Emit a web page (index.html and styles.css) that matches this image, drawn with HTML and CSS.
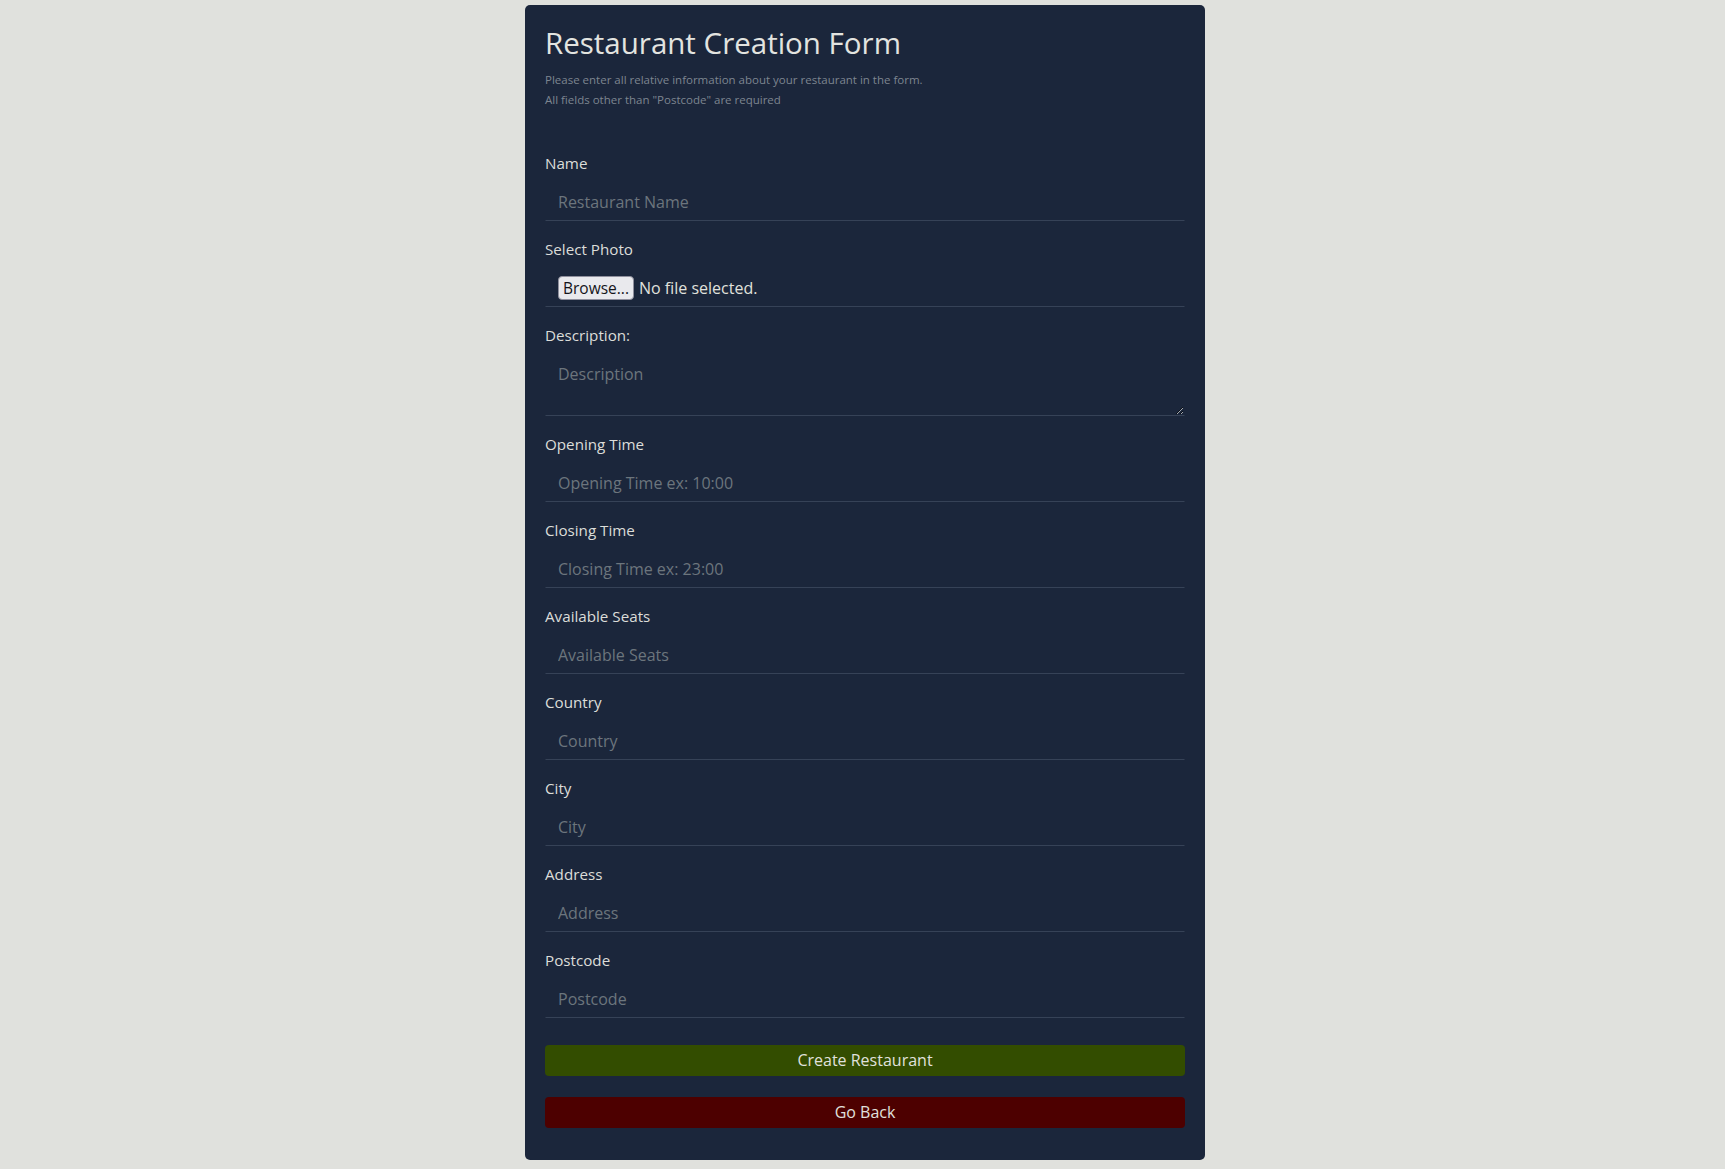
FILE: index.html
```html
<!DOCTYPE html>
<html lang="en">
<head>
<meta charset="utf-8">
<title>Restaurant Creation Form</title>
<link rel="stylesheet" href="styles.css">
</head>
<body>
<div class="page">
  <div class="card">
    <h3 class="title">Restaurant Creation Form</h3>
    <p class="subtitle">Please enter all relative information about your restaurant in the form.<br>All fields other than "Postcode" are required</p>
    <form class="form">
      <div class="group">
        <label class="label">Name</label>
        <input class="control" type="text" placeholder="Restaurant Name">
      </div>
      <div class="group">
        <label class="label">Select Photo</label>
        <div class="control file-control">
          <button type="button" class="browse">Browse...</button>
          <span class="file-status">No file selected.</span>
        </div>
      </div>
      <div class="group">
        <label class="label">Description:</label>
        <textarea class="control textarea" placeholder="Description"></textarea>
      </div>
      <div class="group">
        <label class="label">Opening Time</label>
        <input class="control" type="text" placeholder="Opening Time ex: 10:00">
      </div>
      <div class="group">
        <label class="label">Closing Time</label>
        <input class="control" type="text" placeholder="Closing Time ex: 23:00">
      </div>
      <div class="group">
        <label class="label">Available Seats</label>
        <input class="control" type="text" placeholder="Available Seats">
      </div>
      <div class="group">
        <label class="label">Country</label>
        <input class="control" type="text" placeholder="Country">
      </div>
      <div class="group">
        <label class="label">City</label>
        <input class="control" type="text" placeholder="City">
      </div>
      <div class="group">
        <label class="label">Address</label>
        <input class="control" type="text" placeholder="Address">
      </div>
      <div class="group">
        <label class="label">Postcode</label>
        <input class="control" type="text" placeholder="Postcode">
      </div>
      <div class="actions">
        <button type="button" class="btn btn-create">Create Restaurant</button>
        <button type="button" class="btn btn-back">Go Back</button>
      </div>
    </form>
  </div>
</div>
</body>
</html>
```

FILE: styles.css
```css
* {
  box-sizing: border-box;
}

html, body {
  margin: 0;
  padding: 0;
}

body {
  background: #e0e1dd;
  font-family: "Open Sans", "Noto Sans", "Liberation Sans", sans-serif;
  color: #e0e1dd;
}

.page {
  padding: 5px 0 10px 5px;
}

.card {
  width: 680px;
  margin: 0 auto;
  background: #1b263b;
  border-radius: 5px;
  padding: 20px 20px 32px 20px;
}

.title {
  margin: 0 0 10px 0;
  font-size: 29.5px;
  font-weight: 400;
  line-height: 1.2;
  color: #e3e4e0;
}

.subtitle {
  margin: 0 0 41px 0;
  font-size: 11.5px;
  line-height: 20px;
  color: #7d8590;
}

.form {
  display: flex;
  flex-direction: column;
}

.group {
  display: flex;
  flex-direction: column;
  margin-bottom: 16px;
}

.label {
  font-size: 15.2px;
  line-height: 24px;
  margin-bottom: 8px;
  color: #dcddd9;
}

.control {
  display: block;
  width: 100%;
  height: 38px;
  padding: 6px 12px;
  font-family: inherit;
  font-size: 16px;
  line-height: 24px;
  color: #e0e1dd;
  background: transparent;
  border: 1px solid transparent;
  border-bottom-color: #364257;
  border-radius: 0;
  outline: none;
}

.control::placeholder {
  color: #6c757d;
  opacity: 1;
}

.textarea {
  height: 61px;
  resize: vertical;
}

.file-control {
  display: flex;
  align-items: center;
  gap: 5px;
}

.browse {
  height: 24px;
  padding: 0 4px;
  font-family: inherit;
  font-size: 15.5px;
  line-height: 22px;
  color: #15141a;
  background: #e9e9ed;
  border: 1px solid #8f8f9d;
  border-radius: 4px;
}

.file-status {
  font-size: 16px;
  color: #e0e1dd;
}

.actions {
  display: flex;
  flex-direction: column;
  gap: 21px;
  padding-top: 11px;
}

.btn {
  display: block;
  width: 100%;
  height: 31px;
  padding: 0 8px;
  font-family: inherit;
  font-size: 16px;
  line-height: 29px;
  color: #e0e1dd;
  border: none;
  border-radius: 4px;
  text-align: center;
}

.btn-create {
  background: #334d00;
}

.btn-back {
  background: #4d0000;
}
```
